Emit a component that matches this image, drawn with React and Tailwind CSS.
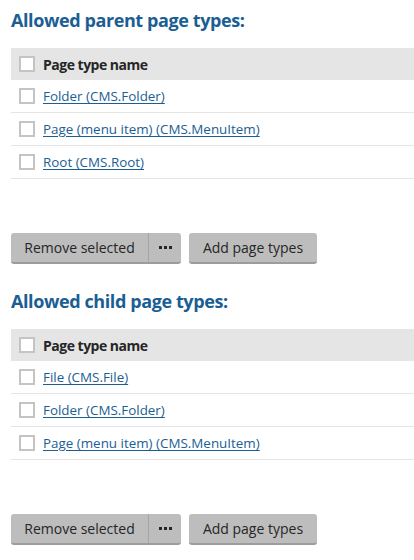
import React from 'react';

const font = { fontFamily: '"Open Sans", "Noto Sans", sans-serif' };

const Checkbox = () => (
  <span className="inline-block w-4 h-4 border-2 border-[#c4c4c4] bg-white shrink-0" />
);

const PageTypeTable = ({ items }) => (
  <div className="ml-[11px]">
    <div className="flex items-center h-8 bg-[#e5e5e5] pl-2">
      <Checkbox />
      <span className="ml-2 text-[14px] font-bold tracking-[-0.5px] text-[#262626]">Page type name</span>
    </div>
    {items.map((item) => (
      <div key={item} className="flex items-center h-[33px] pl-2 border-b border-[#e5e5e5]">
        <Checkbox />
        <a href="#" className="ml-2 text-[13.4px] text-[#1b5e93] underline underline-offset-2">
          {item}
        </a>
      </div>
    ))}
  </div>
);

const ActionButtons = () => (
  <div className="flex ml-[11px] gap-2">
    <div className="flex h-[31px] rounded-[3px] bg-[#bdbdbd] border-b-2 border-[#9c9c9c] text-[14px] text-[#262626]">
      <button className="w-[137px] whitespace-nowrap">Remove selected</button>
      <span className="w-px bg-[#a6a6a6]" />
      <button className="w-8 flex items-center justify-center gap-[2px]">
        <span className="w-[3px] h-[3px] bg-[#262626]" />
        <span className="w-[3px] h-[3px] bg-[#262626]" />
        <span className="w-[3px] h-[3px] bg-[#262626]" />
      </button>
    </div>
    <button className="h-[31px] w-32 whitespace-nowrap rounded-[3px] bg-[#bdbdbd] border-b-2 border-[#9c9c9c] text-[14px] text-[#262626]">
      Add page types
    </button>
  </div>
);

const Section = ({ title, items }) => (
  <section>
    <h2 className="ml-[11px] text-[18px] font-bold tracking-[-0.4px] text-[#1b5e93] leading-[24px]">{title}</h2>
    <div className="mt-[16px]">
      <PageTypeTable items={items} />
    </div>
    <div className="mt-[54px]">
      <ActionButtons />
    </div>
  </section>
);

export default function App() {
  return (
    <div className="w-[414px] h-[560px] bg-white overflow-hidden pt-[8px]" style={font}>
      <Section
        title="Allowed parent page types:"
        items={['Folder (CMS.Folder)', 'Page (menu item) (CMS.MenuItem)', 'Root (CMS.Root)']}
      />
      <div className="mt-[25px]">
        <Section
          title="Allowed child page types:"
          items={['File (CMS.File)', 'Folder (CMS.Folder)', 'Page (menu item) (CMS.MenuItem)']}
        />
      </div>
    </div>
  );
}
